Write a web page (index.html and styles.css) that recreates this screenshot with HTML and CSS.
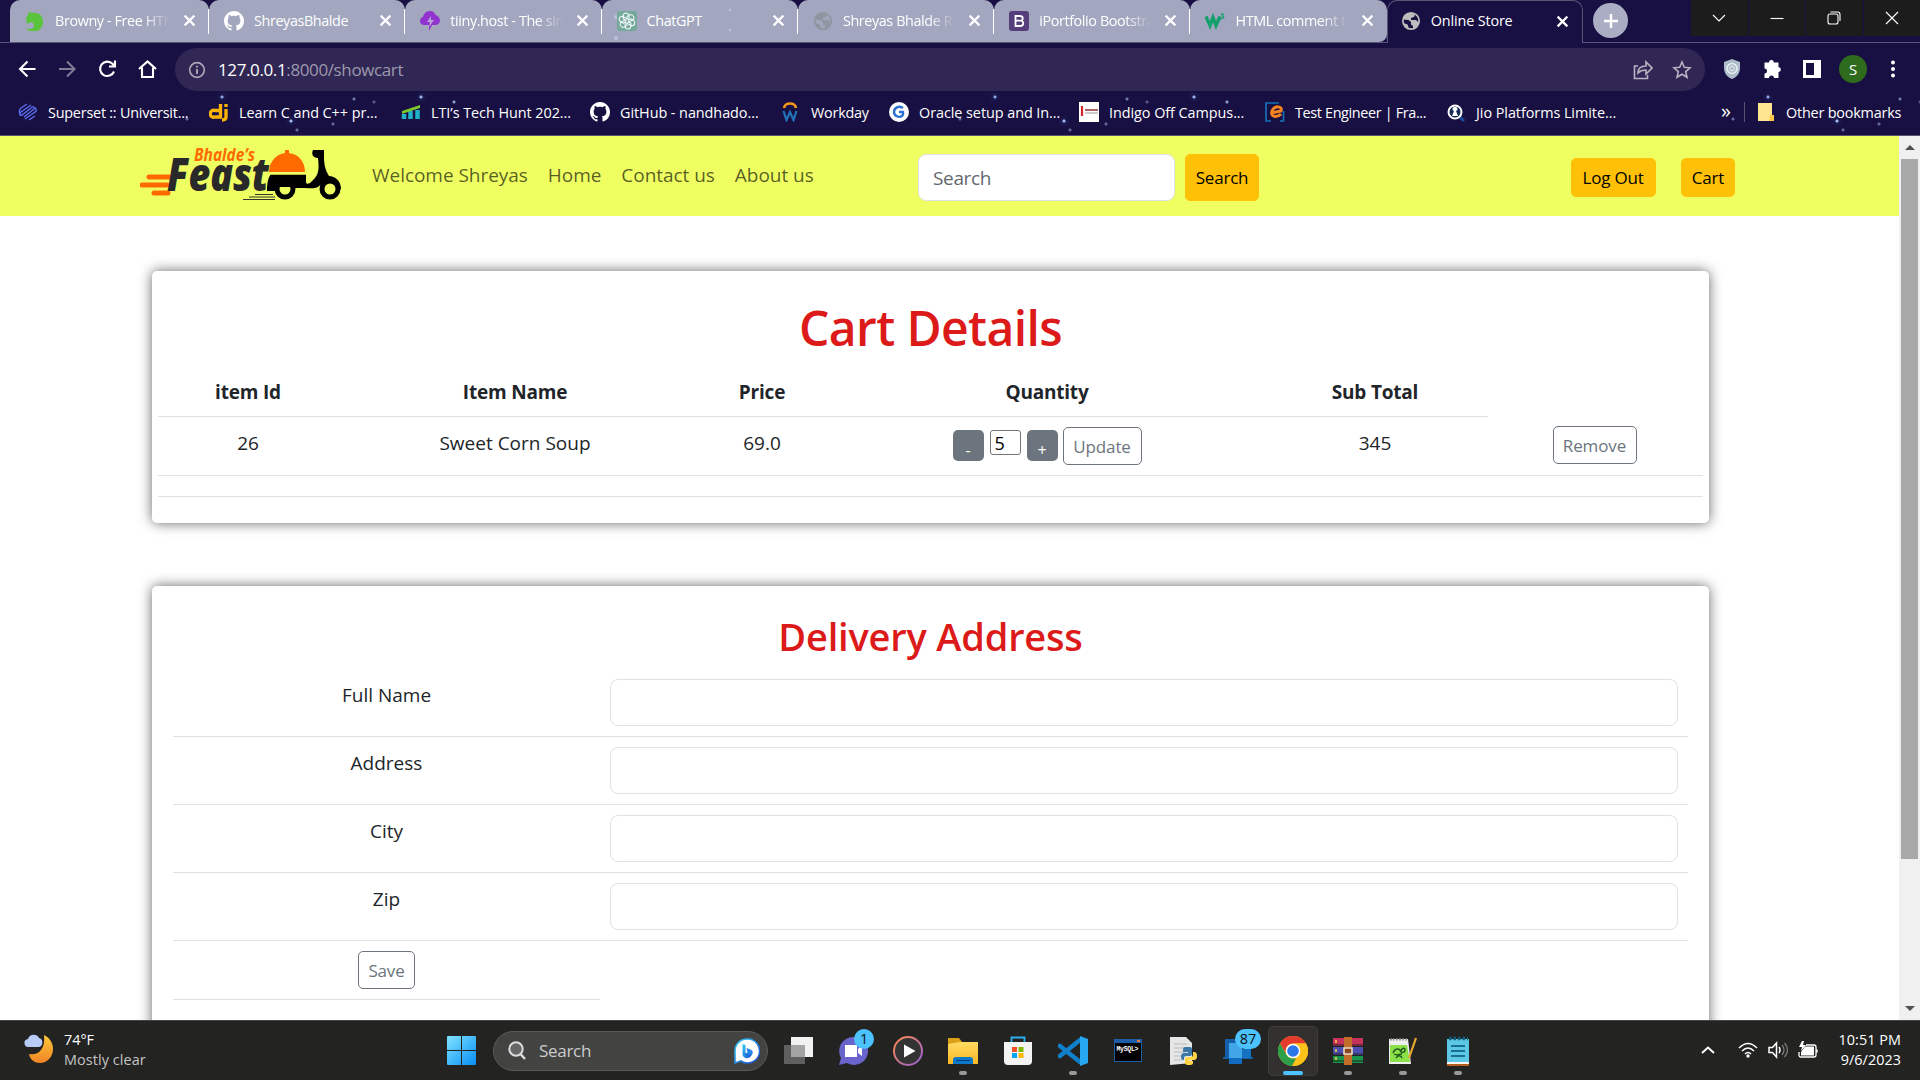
FILE: index.html
```html
<!DOCTYPE html>
<html lang="en">
<head>
<meta charset="utf-8">
<title>Online Store</title>
<link rel="stylesheet" href="styles.css">
</head>
<body>
<svg class="defs" aria-hidden="true">
  <defs>
    <symbol id="close" viewBox="0 0 12 12"><path d="M1.5 1.5l9 9M10.500 1.500l-9 9" stroke="#fff" stroke-width="2" fill="none"/></symbol>
    <symbol id="github" viewBox="0 0 16 16"><path fill="#fff" d="M8 0C3.580 0 0 3.580 0 8c0 3.540 2.290 6.530 5.470 7.590.4.070.550-.170.550-.380 0-.190-.010-.820-.010-1.490-2.010.370-2.530-.490-2.690-.940-.090-.230-.480-.940-.820-1.130-.280-.150-.680-.520-.010-.530.630-.010 1.080.580 1.230.820.720 1.210 1.870.870 2.330.660.070-.520.280-.870.510-1.070-1.780-.2-3.640-.890-3.640-3.950 0-.870.310-1.590.820-2.150-.080-.2-.360-1.020.080-2.120 0 0 .670-.210 2.200.820.640-.180 1.320-.270 2-.270s1.360.090 2 .270c1.530-1.040 2.200-.820 2.200-.820.440 1.100.160 1.920.080 2.120.510.560.820 1.270.820 2.150 0 3.070-1.870 3.750-3.650 3.950.290.250.540.730.540 1.480 0 1.070-.010 1.930-.010 2.200 0 .210.150.460.550.380A8 8 0 0 0 16 8c0-4.420-3.580-8-8-8z"/></symbol>
    <symbol id="globe" viewBox="0 0 20 20"><circle cx="10" cy="10" r="8.200" fill="none" stroke="currentColor" stroke-width="1.700"/><path fill="currentColor" d="M10 2l4 1.500-1 2.500-3 1v2h5l1.500 1.500H18c0 4-3 7-6 7.400V15l-2-1.500V11L7.500 9 2 8.500C3 4.500 6 2 10 2zM2.500 12l4 1.500L8 17.800C5 17 3 15 2.500 12z"/></symbol>
    <linearGradient id="win" x1="0" y1="0" x2="1" y2="1"><stop offset="0" stop-color="#80e4ff"/><stop offset="1" stop-color="#078df5"/></linearGradient>
    <linearGradient id="moon" x1="0" y1="0" x2="0" y2="1"><stop offset="0" stop-color="#ffc93c"/><stop offset="1" stop-color="#f08424"/></linearGradient>
    <linearGradient id="ring" x1="0" y1="0" x2="1" y2="1"><stop offset="0" stop-color="#ff8a4a"/><stop offset="1" stop-color="#9560d8"/></linearGradient>
    <linearGradient id="folder" x1="0" y1="0" x2="0" y2="1"><stop offset="0" stop-color="#ffdb62"/><stop offset="1" stop-color="#fcb822"/></linearGradient>
    <linearGradient id="bing" x1="0" y1="0" x2="1" y2="1"><stop offset="0" stop-color="#35d0f5"/><stop offset="1" stop-color="#1745cf"/></linearGradient>
  </defs>
</svg>
<div class="desktop">
  <header class="chrome">
    <div class="tabstrip">
      <div class="tab tab-first"><svg class="fav" viewBox="0 0 20 20"><path fill="#5ac53c" d="M1 7l2-3 1-4 2 2c7-1 12 2 12 9 0 5-3 8-6 9H5c-2 0-3-2-3-3 3 2 7 1 7-2 0-2-1-3-2-4l-3 1-2 1z"/></svg><span class="tab-title fade">Browny - Free HTML</span><svg class="x"><use href="#close"/></svg></div>
      <div class="tab"><svg class="fav"><use href="#github"/></svg><span class="tab-title">ShreyasBhalde</span><svg class="x"><use href="#close"/></svg></div>
      <div class="tab"><svg class="fav" viewBox="0 0 20 20"><path fill="#9333cf" d="M10 0c3 0 5 2 5.500 4C18 4.500 20 7 20 9.500S18 14 15 14h-3l-3 6v-6H4c-2 0-4-1.500-4-4 0-2 1-3.500 3-4C3.500 3 6 0 10 0z"/><path d="M11 5l-4 6h3l-1 5 5-7h-3z" fill="#b9a5d8"/></svg><span class="tab-title fade">tiiny.host - The simple</span><svg class="x"><use href="#close"/></svg></div>
      <div class="tab"><svg class="fav" viewBox="0 0 20 20"><rect width="20" height="20" rx="3" fill="#74aa9c"/><g fill="none" stroke="#fff" stroke-width="1"><path d="M10 9V5.500l3-1.700a3 3 0 0 1 3 5l-4 2.200"/><path d="M10 9V5.500l3-1.700a3 3 0 0 1 3 5l-4 2.200" transform="rotate(60 10 10)"/><path d="M10 9V5.500l3-1.700a3 3 0 0 1 3 5l-4 2.200" transform="rotate(120 10 10)"/><path d="M10 9V5.500l3-1.700a3 3 0 0 1 3 5l-4 2.200" transform="rotate(180 10 10)"/><path d="M10 9V5.500l3-1.700a3 3 0 0 1 3 5l-4 2.200" transform="rotate(240 10 10)"/><path d="M10 9V5.500l3-1.700a3 3 0 0 1 3 5l-4 2.200" transform="rotate(300 10 10)"/></g></svg><span class="tab-title">ChatGPT</span><svg class="x"><use href="#close"/></svg></div>
      <div class="tab"><svg class="fav globe-dim"><use href="#globe"/></svg><span class="tab-title fade">Shreyas Bhalde Resume</span><svg class="x"><use href="#close"/></svg></div>
      <div class="tab"><svg class="fav" viewBox="0 0 20 20"><rect width="20" height="20" rx="3" fill="#563d7c"/><path d="M6.500 5h4.200c4 0 3.600 4 1.500 4.700 2.900.7 2.900 5.300-1.300 5.300H6.500zM6.500 9.600h4.500" fill="none" stroke="#fff" stroke-width="1.800"/></svg><span class="tab-title fade">iPortfolio Bootstrap</span><svg class="x"><use href="#close"/></svg></div>
      <div class="tab"><svg class="fav" viewBox="0 0 20 20"><path d="M1 5.500l4 9 3-8 3 8 4-9" fill="none" stroke="#12a06c" stroke-width="3.400"/><path d="M15.500 3h3l-1.500 2c3 0 2 3.500-1.500 2.500" fill="none" stroke="#12a06c" stroke-width="1.200"/></svg><span class="tab-title fade">HTML comment tag</span><svg class="x"><use href="#close"/></svg></div>
      <div class="tab active"><svg class="fav globe-lit"><use href="#globe"/></svg><span class="tab-title">Online Store</span><svg class="x"><use href="#close"/></svg></div>
      <div class="newtab"><svg width="16" height="16" viewBox="0 0 16 16"><path d="M8 1v14M1 8h14" stroke="#fff" stroke-width="2.400"/></svg></div>
      <div class="wincontrols">
        <span><svg width="14" height="14" viewBox="0 0 14 14"><path d="M1 4l6 6 6-6"/></svg></span>
        <span><svg width="14" height="14" viewBox="0 0 14 14"><path d="M.500 7.500h13"/></svg></span>
        <span><svg width="14" height="14" viewBox="0 0 14 14"><rect x="1" y="3" width="10" height="10" rx="2"/><path d="M3.500 1h7q2.500 0 2.500 2.500V10"/></svg></span>
        <span><svg width="14" height="14" viewBox="0 0 14 14"><path d="M1 1l12 12M13 1L1 13"/></svg></span>
      </div>
    </div>
    <div class="toolbar">
      <div class="navbtns">
        <svg viewBox="0 0 20 20"><path d="M18.500 10H3M10.500 2.500L3 10l7.500 7.500"/></svg>
        <svg class="dim" viewBox="0 0 20 20"><path d="M2 10h15M10 2.500l7.500 7.500L10 17.500"/></svg>
        <svg viewBox="0 0 20 20"><path d="M17 12.500a7.200 7.200 0 1 1-1.500-7.700L17.500 7M18 1.500v6h-6" /></svg>
        <svg viewBox="0 0 20 20"><path d="M2 10l8.500-7.500L19 10M5 8.500V18h11V8.500"/></svg>
      </div>
      <div class="omnibox">
        <svg width="18" height="18" viewBox="0 0 18 18"><circle cx="9" cy="9" r="7.300" fill="none" stroke="#aaa6b8" stroke-width="1.700"/><path d="M9 8v5M9 4.800v1.800" stroke="#aaa6b8" stroke-width="1.900"/></svg>
        <span class="url"><b>127.0.0.1</b>:8000/showcart</span>
        <svg class="share" width="20" height="20" viewBox="0 0 20 20"><path d="M5 6H1.500v12.500h13V15M5 13c0-5 3-7 8-7V2l6 6-6 6v-4c-4 0-6 1-8 3z"/></svg>
        <svg class="star" width="20" height="20" viewBox="0 0 20 20"><path d="M10 2l2.300 5.300 5.700.5-4.300 3.800 1.300 5.700-5-3-5 3 1.300-5.700L2 7.800l5.700-.5z"/></svg>
      </div>
      <div class="actions">
        <svg viewBox="0 0 20 20"><path d="M10 0l8 3v6c0 5-3 9-8 11-5-2-8-6-8-11V3z" fill="#aebbc8"/><circle cx="10" cy="9.500" r="5" fill="none" stroke="#e9eef2" stroke-width="1.600"/><circle cx="10" cy="9.500" r="2.300" fill="none" stroke="#e9eef2"/></svg>
        <svg viewBox="0 0 20 20"><path fill="#fff" d="M7 3.500a2.400 2.400 0 0 1 4.800 0h4.700v4.700a2.400 2.400 0 0 1 0 4.800v6H12a2.500 2.500 0 0 0-5 0H2.500v-4.500a2.500 2.500 0 0 0 0-5v-6z"/></svg>
        <svg viewBox="0 0 20 20"><path fill="#fff" fill-rule="evenodd" d="M1 1h18v18H1zM4 4v12h8V4z"/></svg>
        <span class="avatar">S</span>
        <svg viewBox="0 0 20 20"><g fill="#fff"><circle cx="10" cy="3.500" r="2"/><circle cx="10" cy="10" r="2"/><circle cx="10" cy="16.500" r="2"/></g></svg>
      </div>
    </div>
    <nav class="bookmarks">
      <span class="bm bm-a"><svg viewBox="0 0 20 20"><g fill="none" stroke="#5a6ff0" stroke-width="1.400" stroke-linejoin="round"><path d="M13 3L3 10c-2 2-1 4 1 3l9-7c2-2 4-1 3 1L6 15M9 2L3 6C1 8 1 10 2 12M7 17l10-7c2-1 1-4 0-4M11 18l6-4"/></g></svg>Superset :: Universit...</span>
      <span class="bm"><svg viewBox="0 0 20 20"><path d="M11.500 2v13H6a3.500 3.500 0 1 1 0-6.500h5M17 7v8q0 3-4 3M17 2v3" fill="none" stroke="#fbb404" stroke-width="3.300"/></svg>Learn C and C++ pr...</span>
      <span class="bm"><svg viewBox="0 0 20 20"><path d="M3 12v5M9.500 9v8M16.500 8v9" stroke="#1eb3c6" stroke-width="4.500"/><path d="M1 9L19 3v3L1 12z" fill="#7bc62d"/></svg>LTI’s Tech Hunt 202...</span>
      <span class="bm"><svg><use href="#github"/></svg>GitHub - nandhado...</span>
      <span class="bm bm-w"><svg viewBox="0 0 20 20"><path d="M3 6c1-6 11-6 12 0" stroke="#f5981e" stroke-width="2.600" fill="none"/><path d="M2.500 9l3 9L9 10l3.500 8 3-9" stroke="#2272b8" stroke-width="2.200" fill="none"/></svg>Workday</span>
      <span class="bm"><svg viewBox="0 0 20 20"><circle cx="10" cy="10" r="10" fill="#fff"/><path d="M14 6c-4-3-9 0-9 4s5 6 8 4c1-1 1.500-2 1-4h-4" fill="none" stroke="#2a6fd6" stroke-width="2.400"/></svg>Oracle setup and In...</span>
      <span class="bm bm-i"><svg viewBox="0 0 20 20"><path fill="#fff" d="M0 0h20v20H0z"/><path d="M3 4v10" stroke="#d2262d" stroke-width="2.200"/><path d="M6 8h13" stroke="#a66" stroke-width="2"/><path d="M6 11h13" stroke="#bbb" stroke-width="1.500"/></svg>Indigo Off Campus...</span>
      <span class="bm bm-t"><svg viewBox="0 0 20 20"><path d="M14 1H1v18h5M18.500 9v10H15" stroke="#1670b8" stroke-width="1.700" fill="none"/><path d="M6 11l10-2c2-5-6-6-9 0-2 6 5 7 9 3" stroke="#f58220" stroke-width="3" fill="none"/></svg>Test Engineer | Fra...</span>
      <span class="bm"><svg viewBox="0 0 20 20"><path d="M13 14l5 5" stroke="#1a4c9c" stroke-width="3"/><circle cx="9" cy="10" r="6.500" fill="#142a55" stroke="#fff" stroke-width="2"/><path d="M9 5a2 2 0 0 1 1 4l2 5H6l2-5a2 2 0 0 1 1-4z" fill="#fff"/></svg>Jio Platforms Limite...</span>
      <span class="more">»</span>
      <span class="bm other"><svg viewBox="0 0 20 20"><path fill="#ffe591" d="M2 1h14v18H2z"/><path fill="#ffc94a" d="M14 13h4v6h-5z"/></svg>Other bookmarks</span>
    </nav>
  </header>

  <div class="viewport">
    <main class="page">
      <nav class="navbar">
        <svg class="logo" viewBox="0 0 202 52">
          <path d="M9 29h20M2 37h25M14 45h14" stroke="#ff6a00" stroke-width="5" stroke-linecap="round"/>
          <text class="logo-feast" x="27" y="43" textLength="102" lengthAdjust="spacingAndGlyphs">Feast</text>
          <text class="logo-name" x="54" y="13" textLength="61" lengthAdjust="spacingAndGlyphs">Bhalde’s</text>
          <path d="M129 24c0-11 8-18 16-19V2h4v3c9 1 16 8 16 19z" fill="#ff6a00"/>
          <path d="M131 26h35v8q0 3 4 1l5-5c4-5 4-10 3-20-5 0-7-4-5-8h11v7c0 9 2 14 5 19 6 0 12 5 12 13h-5a11 11 0 0 0-18-2c-4 2-8 1-13 1h-10l-4 3h-24c0-8 1-13 4-17z"/>
          <circle cx="145" cy="41" r="8" fill="#efff62" stroke="#000" stroke-width="5"/><circle cx="190" cy="41" r="8" fill="#efff62" stroke="#000" stroke-width="5"/>
          <path d="M127 26h41" stroke="#efff62" stroke-width="1.500"/><path d="M130 29h36v10h-38z"/>
          <path d="M115 46.500h18M109 49h26M103 51.500h32" stroke="#333" stroke-width="1"/>
        </svg>
        <div class="links"><a>Welcome Shreyas</a><a>Home</a><a>Contact us</a><a>About us</a></div>
        <form class="search"><input type="text" placeholder="Search"><button type="button" class="btn btn-warn">Search</button></form>
        <div class="account"><button class="btn btn-warn">Log Out</button><button class="btn btn-warn">Cart</button></div>
      </nav>

      <section class="card cart">
        <h1>Cart Details</h1>
        <table>
          <colgroup><col class="c1"><col class="c2"><col class="c3"><col class="c4"><col class="c5"><col class="c6"></colgroup>
          <tr><th>item Id</th><th>Item Name</th><th>Price</th><th>Quantity</th><th>Sub Total</th></tr>
          <tr class="item"><td>26</td><td>Sweet Corn Soup</td><td>69.0</td>
            <td><div class="qty"><button class="step">-</button><input type="text" value="5"><button class="step">+</button><button class="btn btn-line">Update</button></div></td>
            <td>345</td><td><button class="btn btn-line remove">Remove</button></td></tr>
          <tr class="blank"><td colspan="6"></td></tr>
        </table>
      </section>

      <section class="card delivery">
        <h2>Delivery Address</h2>
        <table>
          <colgroup><col class="d1"><col></colgroup>
          <tr><td>Full Name</td><td><input type="text"></td></tr>
          <tr><td>Address</td><td><input type="text"></td></tr>
          <tr><td>City</td><td><input type="text"></td></tr>
          <tr><td>Zip</td><td><input type="text"></td></tr>
          <tr class="save"><td><button class="btn btn-line">Save</button></td></tr>
        </table>
      </section>
    </main>
    <div class="scrollbar"><i class="up"></i><i class="thumb"></i><i class="down"></i></div>
  </div>

  <footer class="taskbar">
    <div class="weather">
      <svg width="30" height="30" viewBox="0 0 30 30"><path d="M20 1c6 3 9 8 9 14 0 8-6 14-13 14-5 0-10-3-11-9 8 2 17-4 15-19z" fill="url(#moon)"/><path d="M5 13a4 4 0 0 1-1-8c1-5 9-6 11-1 4 0 5 8 0 9z" fill="#b9cbf7"/></svg>
      <div><p>74°F</p><p class="sub">Mostly clear</p></div>
    </div>
    <svg class="start" viewBox="0 0 29 29"><path fill="url(#win)" d="M0 1q0-1 1-1h13v14H0zM15 0h13q1 0 1 1v13H15zM0 15h14v14H1q-1 0-1-1zM15 15h14v13q0 1-1 1H15z"/></svg>
    <div class="tasksearch">
      <svg width="20" height="20" viewBox="0 0 20 20"><circle cx="9" cy="8" r="6.700" fill="#666" stroke="#ddd" stroke-width="2"/><path d="M13.500 13l4.500 5" stroke="#ddd" stroke-width="2.400"/></svg>
      <span>Search</span>
      <svg width="26" height="26" viewBox="0 0 26 26"><path d="M13 1a12 12 0 1 1-6 22l-6 2V13A12 12 0 0 1 13 1z" fill="#fff" stroke="url(#bing)" stroke-width="1.600"/><path d="M8.500 6l3 1v8l7-1c0 4-4 7-7 6-2-1-3-2-3-4z" fill="url(#bing)"/><path d="M12.500 10l5 2c2 2 1 4 0 5l-4-2z" fill="#2587ec"/></svg>
    </div>
    <div class="apps">
      <div class="app"><svg viewBox="0 0 30 30"><path fill="#f2f2f2" d="M8 1h22v20H8z"/><path fill="#606060" d="M1 9h21v19H1z"/><path fill="#a4a4a4" d="M8 9h14v12H8z"/></svg></div>
      <div class="app"><svg viewBox="0 0 30 30"><path d="M15 1a14 14 0 1 1-6 26l-8 2 2-7A14 14 0 0 1 15 1z" fill="#6963cc"/><path fill="#fff" d="M7 9h12v12H7zM20 13l4-3v10l-4-3z"/></svg><span class="badge">1</span></div>
      <div class="app"><svg viewBox="0 0 30 30"><circle cx="15" cy="15" r="14" fill="#333" stroke="url(#ring)" stroke-width="2"/><path d="M11 8.500l11.500 6.500L11 21.500z" fill="#fff"/></svg></div>
      <div class="app run"><svg viewBox="0 0 30 30"><path fill="#dba017" d="M0 2h11l3 4v6H0z"/><path fill="url(#folder)" d="M0 8l12-2h18v22H0z"/><path fill="#0b78ca" d="M5 28v-4q0-3 3-3h14q3 0 3 3v4z"/><path d="M8 24.500h14" stroke="#083f85"/></svg></div>
      <div class="app"><svg viewBox="0 0 30 30"><path fill="#f3f3f3" d="M1 6h28v19q0 4-4 4H5q-4 0-4-4z"/><path d="M8.500 6V1.500h13V6" fill="none" stroke="#2ab0f0" stroke-width="1.800"/><path fill="#f25022" d="M9 11h5v5H9z"/><path fill="#7fba00" d="M15.500 11h5v5h-5z"/><path fill="#00a4ef" d="M9 17h5v5H9z"/><path fill="#ffb900" d="M15.500 17h5v5h-5z"/></svg></div>
      <div class="app run"><svg viewBox="0 0 30 30"><path d="M2 10L22 26M2 20L22 4" stroke="#1180cb" stroke-width="4.500" stroke-linecap="round"/><path fill="#27a7f2" d="M22 0l8 3v24l-8 3z"/></svg></div>
      <div class="app"><svg viewBox="0 0 30 30"><path fill="#1c5ea8" d="M1 3h28v23H1z"/><path fill="#000" d="M2 7h26v18H2z"/><path fill="#e77b46" d="M24 4h3v2h-3z"/><text class="mysql" x="3.500" y="15" textLength="22">MySQL&gt;</text></svg></div>
      <div class="app"><svg viewBox="0 0 30 30"><path fill="#e6e6e6" d="M2 1h16l6 6v20L2 29z"/><path d="M6 8h13M6 12h14M6 16h12M6 20h8M6 24h8" stroke="#bbb"/><path fill="#3b78a8" d="M17 11h5q2 0 2 2v5q0 2-2 2h-4q-2 0-2 2v2h-1q-2 0-2-3 0-4 3-4h4v-1h-5v-2q0-3 2-3z"/><path fill="#ffd545" d="M25 16h1q3 0 3 4t-3 4h-5v1h4v2q0 2-4 2t-4-2v-4q0-2 2-2h4q2 0 2-2z"/></svg></div>
      <div class="app"><svg viewBox="0 0 30 30"><path fill="#145fa8" d="M2 3h12v18h16v2H0v-2h2z"/><path fill="#1372c2" d="M14 13h14v9H14z"/><path fill="#40a6e8" d="M6 7h13v17H6z"/><path fill="#116bc0" d="M6 22h13v6H6z"/></svg><span class="badge wide">87</span></div>
      <div class="app focus"><svg viewBox="0 0 30 30"><circle cx="15" cy="15" r="15" fill="#fbc31a"/><path fill="#e33b2e" d="M2 7.500A15 15 0 0 1 28 7.500H15a7.500 7.500 0 0 0-6.500 11z"/><path fill="#2d9f4b" d="M2 7.500l6.500 11.200A7.500 7.500 0 0 0 15 22.500h3L14 30A15 15 0 0 1 2 7.500z"/><path fill="#fbc31a" d="M28 7.500A15 15 0 0 1 14 30l7.500-11.300A7.500 7.500 0 0 0 15 7.500z"/><circle cx="15" cy="15" r="7.300" fill="#fff"/><circle cx="15" cy="15" r="5.800" fill="#2b77e8"/></svg></div>
      <div class="app run"><svg viewBox="0 0 30 30"><path fill="#c5325b" d="M0 2h30v8H0z"/><path fill="#4c4fb0" d="M0 11h30v8H0z"/><path fill="#18954a" d="M0 20h30v7H0z"/><path d="M0 9h30M0 18h30M0 25h30" stroke="#222" /><path fill="#c36d2b" d="M11 1h8v28h-8z"/><path d="M3 4v3M3 13v3M3 21v3" stroke="#ffcf3e" stroke-width="1.500"/><path d="M11 12h8v6h-8z" fill="#8c4720" stroke="#e8dccd" stroke-width="1.600"/></svg></div>
      <div class="app run"><svg viewBox="0 0 30 30"><path fill="#eee" d="M1 3h19l3 25H1z"/><path d="M2 3.500h18" stroke="#999" stroke-dasharray="2 1" stroke-width="2"/><path fill="#8be04a" d="M2 9h17l3 17H2z"/><path d="M5 17c2-5 6-5 8-2 1-3 4-4 4-1s-4 3-5 1M6 18c3 2 5 0 8 0M8 22c2-3 5-3 6 0" stroke="#245c1c" stroke-width="1.500" fill="none"/><path d="M28 2l-7 20" stroke="#e8a92e" stroke-width="2.200"/></svg></div>
      <div class="app run"><svg viewBox="0 0 30 30"><path fill="#5cc8e6" d="M4 3h22v24H4z"/><path fill="#f5f5f5" d="M4 26h22v2H4z"/><path fill="#b65d20" d="M4 28h22v2H4z"/><path d="M6 2.500h19" stroke="#105f7e" stroke-width="3.500" stroke-dasharray="2.500 2"/><path d="M8 10h14M8 15h14M8 20h14" stroke="#176e91" stroke-width="2"/></svg></div>
    </div>
    <div class="tray">
      <svg width="14" height="8" viewBox="0 0 14 8"><path d="M1 7l6-5.500L13 7" stroke-width="2"/></svg>
      <svg class="wifi" width="20" height="16" viewBox="0 0 20 16"><path d="M1 6q9-9 18 0M4 9q6-6 12 0M7 12q3-3 6 0" stroke-width="1.500"/><circle cx="10" cy="14" r="1.700" fill="#fff" stroke="none"/></svg>
      <svg width="20" height="18" viewBox="0 0 20 18"><path d="M1 6.500h3.500L8.500 2v14l-4-4.500H1zM11 6q2 3 0 6" stroke-width="1.500"/><path d="M14 4q4 5 0 10M16.500 2q6 7 0 14" class="faint"/></svg>
      <svg width="20" height="18" viewBox="0 0 20 18"><path d="M7 5.500h9v9H3v-3.500z" class="solid"/><path d="M8 4h8q2 0 2 2v8q0 2-2 2H3q-2 0-2-2v-3M19 8.500v3" stroke-width="1.300"/><path d="M4 0L1 6h3l-1 4 5-6H5l1-4z" class="solid"/></svg>
      <div class="clock"><p>10:51 PM</p><p>9/6/2023</p></div>
    </div>
  </footer>
</div>
</body>
</html>
```
FILE: styles.css
```css
* { box-sizing: border-box; }
body { margin: 0; font-family: "Open Sans", "Noto Sans", sans-serif; color: #212529; overflow: hidden; }
p, h1, h2 { margin: 0; }
input, button { font-family: inherit; margin: 0; }
svg { display: block; flex: none; }
.defs { position: absolute; width: 0; height: 0; }
.desktop { width: 1920px; height: 1080px; display: flex; flex-direction: column; }

/* Browser frame */
.chrome {
  height: 136px; flex: none; color: #fff; font-size: 14.4px; border-bottom: 1px solid #5a5370;
  background-color: #180f42;
  background-image:
    radial-gradient(circle at 222px 97px, #8ea4e4 1px, #1a1a50 2px, transparent 6px),
    radial-gradient(circle at 421px 97px, #9fb2ec 1px, #1a1c52 2px, transparent 6px),
    radial-gradient(circle at 454px 102px, #8e9cd4 1px, transparent 2px),
    radial-gradient(circle at 354px 99px, #6f78b0 1px, transparent 2px),
    radial-gradient(circle at 291px 121px, #a9b8f0 1px, #1a1c52 2px, transparent 6px),
    radial-gradient(circle at 333px 124px, #6468a0 1px, transparent 2px),
    radial-gradient(circle at 187px 119px, #6468a0 1px, transparent 2px),
    radial-gradient(circle at 297px 130px, #6468a0 1px, transparent 2px),
    radial-gradient(circle at 374px 102px, #55588f 1px, transparent 2px),
    radial-gradient(circle at 616px 17px, #a9b8f0 1px, transparent 3px),
    radial-gradient(circle at 616px 38px, #a9b8f0 1px, transparent 3px),
    radial-gradient(circle at 730px 10px, #8e98d0 1px, transparent 2px),
    radial-gradient(circle at 730px 30px, #8e98d0 1px, transparent 2px);
  background-size: 773px 135px;
}
.tabstrip { height: 43px; display: flex; padding-left: 10px; border-bottom: 1px solid #5c5578; }
.tab { width: 196.3px; height: 42px; flex: none; display: flex; align-items: center; padding: 0 13px 1px 15px; gap: 10px; background: rgba(190, 196, 214, .84); border-radius: 10px 10px 0 0; background-clip: padding-box; position: relative; }
.tab-first { width: 199px; }
.tab:not(.active):not(:nth-child(7))::after { content: ""; position: absolute; right: 0; top: 9px; width: 1px; height: 25px; background: #fff; }
.tab:nth-child(7) { border-radius: 10px 10px 8px 0; }
.tab.active { height: 43px; background: #180f42; border: 1px solid #5c5578; border-bottom: 0; padding-left: 13px; padding-bottom: 2px; }
.fav { width: 20px; height: 20px; }
.globe-dim { color: #8f969f; }
.globe-lit { color: #bdbdbd; }
.tab-title { flex: 1; overflow: hidden; white-space: nowrap; line-height: 22px; letter-spacing: -.4px; }
.active .tab-title { letter-spacing: -.15px; }
.fade { -webkit-mask-image: linear-gradient(90deg, #000 75%, transparent 98%); mask-image: linear-gradient(90deg, #000 75%, transparent 98%); }
.x { width: 13px; height: 13px; }
.newtab { width: 35px; height: 35px; margin: 3px 0 0 10px; border-radius: 50%; background: #aaadc4; display: grid; place-items: center; }
.wincontrols { margin-left: auto; display: flex; gap: 1px; height: 36px; }
.wincontrols span { width: 56.500px; background: #1c1c1c; display: grid; place-items: center; }
.wincontrols path, .wincontrols rect { fill: none; stroke: #fff; stroke-width: 1.100; }
.toolbar { height: 48px; padding-top: 5px; display: flex; align-items: center; }
.navbtns { display: flex; gap: 20px; padding: 0 0 2px 17px; width: 175px; }
.navbtns svg { width: 20px; height: 20px; fill: none; stroke: #fff; stroke-width: 2.100; }
.navbtns .dim { opacity: .45; }
.omnibox { width: 1530px; height: 43px; border-radius: 22px; background: #302754; display: flex; align-items: center; padding: 0 13px; }
.url { flex: 1; margin-left: 12px; padding-bottom: 1px; font-size: 17px; letter-spacing: -.380px; color: #9d98ae; }
.url b { font-weight: 400; color: #fff; }
.share, .star { fill: none; stroke: #b7b3c2; stroke-width: 1.600; }
.share { margin-right: 19px; }
.actions { display: flex; align-items: center; padding: 0 0 2px 17px; gap: 20px; }
.actions svg { width: 20px; height: 20px; }
.avatar { width: 28px; height: 28px; border-radius: 50%; background: #2f6b1c; display: grid; place-items: center; font-size: 15px; margin: 0 -4px 0 -3px; }
.bookmarks { height: 44px; display: grid; align-items: center; grid-template-columns: 191px 192px 189px 191px 108px 190px 186px 181px 275px 23px auto; padding: 0 0 2px 18px; }
.bm { display: flex; align-items: center; gap: 10px; white-space: nowrap; font-size: 14.400px; letter-spacing: -.050px; }
.bm-a, .bm-w { letter-spacing: -.220px; }
.bm-t { letter-spacing: -.350px; }
.bm svg { width: 20px; height: 20px; }
.more { font-size: 20px; padding-bottom: 3px; }
.other { border-left: 1px solid #5a5370; padding-left: 11px; letter-spacing: -.200px; }

/* Web page */
.viewport { height: 884px; flex: none; display: flex; overflow: hidden; background: #fff; }
.page { width: 1899px; height: 884px; overflow: hidden; }
.scrollbar { width: 21px; background: #f0f0f0; display: flex; flex-direction: column; align-items: center; }
.up, .down { width: 0; height: 0; border: 5px solid transparent; }
.up { border-top: 0; border-bottom-color: #505050; margin: 9px 0; }
.down { border-bottom: 0; border-top-color: #505050; margin-top: 147px; }
.thumb { width: 17px; height: 700px; background: #a8a8a8; }
.navbar { height: 80px; background: #efff62; display: flex; align-items: center; padding: 0 164px 0 140px; }
.logo { width: 202px; height: 52px; margin-bottom: 4px; }
.logo-feast { font: italic 800 46px "Open Sans", sans-serif; fill: #292929; }
.logo-name { font: italic 700 17px "Open Sans", sans-serif; fill: #ff6a00; }
.links { display: flex; gap: 20px; margin-left: 30px; width: 546px; font-size: 19px; letter-spacing: -.040px; line-height: 30px; padding-bottom: 2px; color: rgba(0, 0, 0, .65); white-space: nowrap; }
.search { display: flex; gap: 10px; padding-top: 3px; }
.search input { width: 257px; height: 47px; padding: 0 14px; border: 1px solid #dee2e6; border-radius: 8px; font-size: 19px; letter-spacing: -.350px; background: #fff; }
.search input::placeholder { color: #63686e; opacity: 1; }
.btn { border: 1px solid; border-radius: 5px; height: 39px; padding: 0 9px; font-size: 17px; letter-spacing: -.2px; display: block; text-align: center; }
.btn-warn { background: #ffc107; border-color: #ffc107; color: #000; width: 85px; padding: 0; }
.search .btn { width: 74px; height: 47px; }
.account { display: flex; gap: 25px; margin-left: auto; padding-top: 3px; }
.account .btn:first-child { padding-right: 1px; }
.account .btn:last-child { width: 54px; }
.btn-line { background: #fff; border-color: #6c757d; color: #6c757d; padding: 0; }
.qty .btn, .remove { height: 38px; letter-spacing: -.100px; }
.card { width: 1557px; margin-left: 152px; background: #fff; border-radius: 5px; box-shadow: 0 0 13px rgba(0, 0, 0, .6); text-align: center; }
h1, h2 { color: #dc1a1a; font-weight: 600; }
h1 { font-size: 48px; line-height: 64px; height: 70px; letter-spacing: -.6px; }
h2 { font-size: 38px; line-height: 50px; height: 58px; letter-spacing: -.2px; }
table { border-collapse: separate; border-spacing: 0; table-layout: fixed; font-size: 19px; line-height: 30px; }
th { font-weight: 700; letter-spacing: -.2px; }
td, th { padding: 11px 10px 9px; border-bottom: 1px solid #dee2e6; vertical-align: top; text-align: center; height: 51px; }
.cart { height: 252px; margin-top: 55px; padding: 25px 6px 0; }
.cart table { width: 1545px; }
.c1 { width: 180px; } .c2 { width: 354px; } .c3 { width: 140px; } .c4 { width: 430px; } .c5 { width: 226px; } .c6 { width: 215px; }
.item td { height: 59px; }
.item td:nth-child(4), .item td:last-child { padding-top: 9px; padding-bottom: 0; }
.item td:last-child { padding-right: 12px; }
.blank td { height: 21px; padding: 0; }
.qty { display: flex; justify-content: center; height: 40px; padding-top: 1px; }
.qty .btn { width: 79px; margin-left: 5px; }
.step { width: 31px; height: 31px; margin-top: 3px; border: 0; border-radius: 5px; background: #6c757d; color: #fff; font-size: 16px; line-height: 20px; padding: 9px 0 0; }
.qty input { width: 31px; height: 25px; margin: 3px 6px 0; border: 1px solid #767676; border-radius: 3px; padding: 0 4px; font-size: 18px; }
.remove { width: 84px; margin: 0 auto; }
.delivery { height: 480px; margin-top: 63px; padding: 25px 21px 0; }
.delivery table { width: 1515px; }
.d1 { width: 427px; }
.delivery td { height: 68px; }
.delivery td:last-child { padding: 10px; }
.delivery input { width: 1068px; height: 47px; display: block; border: 1px solid #dee2e6; border-radius: 8px; }
.delivery .save td { height: 59px; padding-bottom: 10px; }
.save .btn { width: 57px; height: 38px; margin: 0 auto; }

/* Taskbar */
.taskbar { height: 60px; flex: none; background: #232322; border-top: 1px solid #454545; display: flex; align-items: center; color: #fff; font-size: 14.400px; }
.weather { width: 447px; padding: 0 0 2px 24px; display: flex; gap: 10px; align-items: center; line-height: 20px; }
.weather svg { margin-bottom: 2px; }
.sub { color: #c4c4c4; letter-spacing: .1px; }
.start { width: 29px; height: 29px; }
.tasksearch { width: 275px; height: 40px; margin-left: 17px; border-radius: 20px; background: #434342; border: 1px solid #5a5a5a; display: flex; align-items: center; padding: 0 7px 0 13px; }
.tasksearch span { flex: 1; margin-left: 12px; font-size: 17px; letter-spacing: -.300px; color: #ccc; }
.apps { display: flex; gap: 5px; margin-left: 5px; }
.app { width: 50px; height: 50px; border-radius: 5px; display: flex; flex-direction: column; align-items: center; padding-top: 10px; position: relative; }
.app svg { width: 30px; height: 30px; }
.run::after, .focus::after { content: ""; width: 8px; height: 4px; border-radius: 2px; background: #999; margin-top: 5px; }
.focus { background: #323130; outline: 1px solid #3d3c3b; outline-offset: -1px; }
.focus::after { width: 20px; background: #4cc2ff; }
.badge { position: absolute; left: 26px; top: 3px; min-width: 20px; height: 20px; border-radius: 10px; background: #4cc2ff; color: #111; text-align: center; line-height: 20px; font-size: 14.400px; }
.badge.wide { width: 26px; left: 22px; }
.mysql { font: 700 6.500px "Liberation Mono", monospace; fill: #fff; }
.tray { margin-left: auto; display: flex; align-items: center; padding: 0 19px 2px 0; }
.tray svg { margin-right: 10px; }
.tray svg path { fill: none; stroke: #fff; }
.tray svg .solid { fill: #fff; stroke: none; }
.tray svg:first-child { margin-right: 23px; }
.tray svg .faint { stroke: #777; stroke-width: 1.300; }
.clock { text-align: right; line-height: 20px; margin-left: 7px; width: 66px; letter-spacing: .050px; white-space: nowrap; }
```
